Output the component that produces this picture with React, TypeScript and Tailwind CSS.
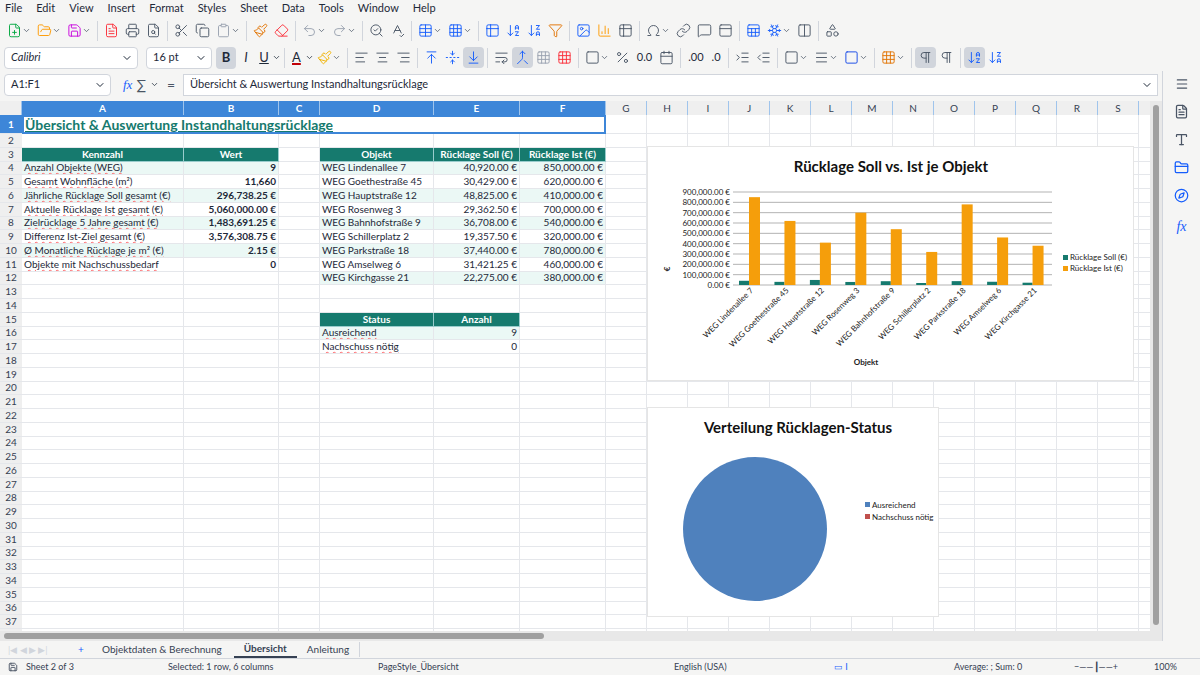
import React from "react";
import {
  FilePlus, FolderOpen, Save, FileText, Printer, FileSearch, Scissors, Copy, Clipboard, Paintbrush, Eraser,
  Undo2, Redo2, SearchCheck, SpellCheck, Table, Grid3x3, ArrowDownAZ, ArrowDownZA, Filter, Image, BarChart3,
  Table2, Omega, Link, MessageSquare, PanelTop, Sheet, Snowflake, Columns2, Shapes, ChevronDown,
  AlignLeft, AlignCenter, AlignRight, ArrowUpToLine, FoldVertical, ArrowDownToLine, WrapText, Merge, Percent,
  Calendar, IndentIncrease, IndentDecrease, Square, Pilcrow, Menu, Type, FolderClosed, Compass,
} from "lucide-react";

const font = { fontFamily: "Lato, 'Open Sans', sans-serif" };
const cols = [22, 162, 95, 41, 114, 86, 86, 41, 41, 41, 41, 41, 41, 41, 41, 41, 41, 41, 41, 41];
const letters = ["", "A", "B", "C", "D", "E", "F", "G", "H", "I", "J", "K", "L", "M", "N", "O", "P", "Q", "R", "S"];

type Cell = { t: string; right?: boolean; bold?: boolean; head?: boolean; shade?: boolean; wavy?: boolean };
const left: [string, string][] = [
  ["Anzahl Objekte (WEG)", "9"],
  ["Gesamt Wohnfläche (m²)", "11,660"],
  ["Jährliche Rücklage Soll gesamt (€)", "296,738.25 €"],
  ["Aktuelle Rücklage Ist gesamt (€)", "5,060,000.00 €"],
  ["Zielrücklage 5 Jahre gesamt (€)", "1,483,691.25 €"],
  ["Differenz Ist-Ziel gesamt (€)", "3,576,308.75 €"],
  ["Ø Monatliche Rücklage je m² (€)", "2.15 €"],
  ["Objekte mit Nachschussbedarf", "0"],
];
const objs: [string, number, number][] = [
  ["WEG Lindenallee 7", 40920, 850000],
  ["WEG Goethestraße 45", 30429, 620000],
  ["WEG Hauptstraße 12", 48825, 410000],
  ["WEG Rosenweg 3", 29362.5, 700000],
  ["WEG Bahnhofstraße 9", 36708, 540000],
  ["WEG Schillerplatz 2", 19357.5, 320000],
  ["WEG Parkstraße 18", 37440, 780000],
  ["WEG Amselweg 6", 31421.25, 460000],
  ["WEG Kirchgasse 21", 22275, 380000],
];
const eur = (n: number) => n.toLocaleString("en-US", { minimumFractionDigits: 2, maximumFractionDigits: 2 }) + " €";

function cellFor(r: number, c: number): Cell | null {
  if (r === 3) {
    const h: Record<number, string> = { 1: "Kennzahl", 2: "Wert", 4: "Objekt", 5: "Rücklage Soll (€)", 6: "Rücklage Ist (€)" };
    if (h[c]) return { t: h[c], head: true };
  }
  if (r >= 4 && r <= 11 && (c === 1 || c === 2)) {
    const row = left[r - 4];
    const shade = r % 2 === 0;
    return c === 1 ? { t: row[0], shade, wavy: true } : { t: row[1], right: true, bold: true, shade };
  }
  if (r >= 4 && r <= 12 && c >= 4 && c <= 6) {
    const o = objs[r - 4];
    const shade = r % 2 === 0;
    if (c === 4) return { t: o[0], shade };
    return { t: eur(c === 5 ? o[1] : o[2]), right: true, shade };
  }
  if (r === 15 && c === 4) return { t: "Status", head: true };
  if (r === 15 && c === 5) return { t: "Anzahl", head: true };
  if (r === 16 && c === 4) return { t: "Ausreichend", shade: true, wavy: true };
  if (r === 16 && c === 5) return { t: "9", right: true, shade: true };
  if (r === 17 && c === 4) return { t: "Nachschuss nötig", wavy: true };
  if (r === 17 && c === 5) return { t: "0", right: true };
  return null;
}

const Ico = ({ I, dd, c = "text-gray-600" }: { I: any; dd?: boolean; c?: string }) => (
  <div className="flex items-center gap-0 px-[3px]">
    <I size={15} strokeWidth={1.5} className={c} />
    {dd && <ChevronDown size={9} className="text-gray-600" />}
  </div>
);
const Sep = () => <div className="w-px h-5 bg-gray-300 mx-[3px]" />;

function BarChart() {
  const x0 = 85, x1 = 404, y0 = 138, yTop = 45;
  const cw = (x1 - x0) / 9;
  const sy = (v: number) => y0 - (v / 900000) * (y0 - yTop);
  return (
    <svg width="485" height="233" className="bg-white" style={font}>
      <text x="243" y="25" textAnchor="middle" fontSize="15" fontWeight="bold" fill="#111">Rücklage Soll vs. Ist je Objekt</text>
      {Array.from({ length: 10 }).map((_, i) => {
        const v = i * 100000;
        const y = sy(v);
        return (
          <g key={i}>
            <line x1={x0} x2={x1} y1={y} y2={y} stroke="#b3b3b3" strokeWidth="1" />
            <text x={x0 - 3} y={y + 3} textAnchor="end" fontSize="8" fill="#222">{eur(v)}</text>
          </g>
        );
      })}
      {objs.map((o, i) => {
        const bx = x0 + i * cw;
        return (
          <g key={o[0]}>
            <rect x={bx + 6} y={sy(o[1])} width="10" height={y0 - sy(o[1])} fill="#167a6e" />
            <rect x={bx + 16} y={sy(o[2])} width="11" height={y0 - sy(o[2])} fill="#f59e0b" />
            <text transform={`translate(${bx + cw / 2 + 3},${y0 + 6}) rotate(-45)`} textAnchor="end" fontSize="8" fill="#222">{o[0]}</text>
          </g>
        );
      })}
      <text transform="translate(22,122) rotate(-90)" textAnchor="middle" fontSize="8" fontWeight="bold" fill="#222">€</text>
      <text x="218" y="218" textAnchor="middle" fontSize="8" fontWeight="bold" fill="#222">Objekt</text>
      <rect x="415" y="108" width="5" height="5" fill="#167a6e" />
      <text x="422" y="113" fontSize="8" fill="#222">Rücklage Soll (€)</text>
      <rect x="415" y="119" width="5" height="5" fill="#f59e0b" />
      <text x="422" y="124" fontSize="8" fill="#222">Rücklage Ist (€)</text>
    </svg>
  );
}

function PieChart() {
  return (
    <svg width="290" height="208" className="bg-white" style={font}>
      <text x="150" y="25" textAnchor="middle" fontSize="15" fontWeight="bold" fill="#111">Verteilung Rücklagen-Status</text>
      <circle cx="107" cy="121" r="72" fill="#4f81bd" />
      <rect x="217" y="94" width="5" height="5" fill="#4f81bd" />
      <text x="224" y="100" fontSize="8" fill="#222">Ausreichend</text>
      <rect x="217" y="106" width="5" height="5" fill="#c0504d" />
      <text x="224" y="112" fontSize="8" fill="#222">Nachschuss nötig</text>
    </svg>
  );
}

export default function App() {
  const rows = Array.from({ length: 38 }, (_, i) => i + 1);
  const gridCols = cols.map((w) => w + "px").join(" ") + " 1fr";
  return (
    <div className="w-[1200px] h-[675px] overflow-hidden bg-[#f5f5f4] flex flex-col text-[11px] text-gray-800" style={font}>
      {/* menu */}
      <div className="h-[17px] flex items-center gap-[14px] px-[5px] text-[11px] text-gray-800">
        {["File", "Edit", "View", "Insert", "Format", "Styles", "Sheet", "Data", "Tools", "Window", "Help"].map((m) => <span key={m}>{m}</span>)}
      </div>
      {/* toolbar 1 */}
      <div className="h-[27px] flex items-center px-1">
        <Ico I={FilePlus} dd c="text-green-600" /><Ico I={FolderOpen} dd c="text-amber-500" /><Ico I={Save} dd c="text-fuchsia-600" /><Sep />
        <Ico I={FileText} c="text-red-500" /><Ico I={Printer} /><Ico I={FileSearch} /><Sep />
        <Ico I={Scissors} /><Ico I={Copy} /><Ico I={Clipboard} dd c="text-gray-400" /><Sep />
        <Ico I={Paintbrush} c="text-amber-600" /><Ico I={Eraser} c="text-red-500" /><Sep />
        <Ico I={Undo2} dd c="text-gray-400" /><Ico I={Redo2} dd c="text-gray-400" /><Sep />
        <Ico I={SearchCheck} /><Ico I={SpellCheck} /><Sep />
        <Ico I={Table} dd c="text-blue-600" /><Ico I={Grid3x3} dd c="text-blue-600" /><Sep />
        <Ico I={Table2} c="text-blue-600" /><Ico I={ArrowDownAZ} c="text-blue-600" /><Ico I={ArrowDownZA} c="text-blue-600" /><Ico I={Filter} c="text-amber-600" /><Sep />
        <Ico I={Image} c="text-blue-600" /><Ico I={BarChart3} c="text-amber-500" /><Ico I={Table2} /><Sep />
        <Ico I={Omega} dd /><Ico I={Link} /><Ico I={MessageSquare} /><Ico I={PanelTop} /><Sep />
        <Ico I={Sheet} c="text-blue-600" /><Ico I={Snowflake} dd c="text-blue-600" /><Ico I={Columns2} /><Sep /><Ico I={Shapes} />
      </div>
      {/* toolbar 2 */}
      <div className="h-[27px] flex items-center px-1">
        <div className="w-[134px] h-[22px] bg-white border border-gray-300 rounded flex items-center justify-between pl-1.5 pr-1 italic">
          Calibri<ChevronDown size={12} />
        </div>
        <div className="w-[66px] h-[22px] ml-2 bg-white border border-gray-300 rounded flex items-center justify-between pl-1.5 pr-1">
          16 pt<ChevronDown size={12} />
        </div>
        <div className="ml-1 w-[20px] h-[22px] bg-gray-300 rounded flex items-center justify-center font-bold text-[13px]">B</div>
        <span className="w-[20px] text-center italic text-[13px]">I</span>
        <span className="w-[16px] text-center underline text-[13px]">U</span><ChevronDown size={9} /><Sep />
        <span className="text-[13px] underline decoration-red-700 decoration-2 px-1">A</span><ChevronDown size={9} />
        <Ico I={Paintbrush} dd c="text-yellow-500" /><Sep />
        <Ico I={AlignLeft} /><Ico I={AlignCenter} /><Ico I={AlignRight} /><Sep />
        <Ico I={ArrowUpToLine} c="text-blue-600" /><Ico I={FoldVertical} c="text-blue-600" />
        <div className="bg-gray-300 rounded py-[3px]"><Ico I={ArrowDownToLine} c="text-blue-600" /></div><Sep />
        <Ico I={WrapText} /><div className="bg-gray-300 rounded py-[3px]"><Ico I={Merge} c="text-blue-600" /></div><Ico I={Grid3x3} c="text-gray-400" /><Ico I={Grid3x3} c="text-red-500" /><Sep />
        <Ico I={Square} dd /><Ico I={Percent} /><span className="px-1">0.0</span><Ico I={Calendar} /><Sep />
        <span className="px-1">.00</span><span className="px-1">.0</span><Sep />
        <Ico I={IndentIncrease} /><Ico I={IndentDecrease} /><Sep />
        <Ico I={Square} dd /><Ico I={Menu} dd /><Ico I={Square} dd c="text-blue-700" /><Sep />
        <Ico I={Grid3x3} dd c="text-amber-600" /><Sep />
        <div className="bg-gray-300 rounded py-[3px]"><Ico I={Pilcrow} /></div><Ico I={Pilcrow} /><Sep />
        <div className="bg-gray-300 rounded py-[3px]"><Ico I={ArrowDownAZ} c="text-blue-600" /></div><Ico I={ArrowDownZA} c="text-blue-600" />
      </div>
      <div className="flex flex-1 min-h-0">
        <div className="w-[1162px] flex flex-col">
          {/* formula bar */}
          <div className="h-[27px] flex items-center px-1 gap-1">
            <div className="w-[107px] h-[22px] bg-white border border-gray-300 rounded flex items-center justify-between pl-1.5 pr-1">
              A1:F1<ChevronDown size={12} />
            </div>
            <span className="ml-2 italic text-blue-600 text-[13px]" style={{ fontFamily: "'Liberation Serif', serif" }}>fx</span>
            <span className="text-[14px] text-gray-600">∑</span><ChevronDown size={9} />
            <span className="text-[14px] text-gray-600 px-1">=</span>
            <div className="flex-1 h-[22px] bg-white border border-gray-300 flex items-center justify-between pl-1.5 pr-1">
              Übersicht &amp; Auswertung Instandhaltungsrücklage<ChevronDown size={12} />
            </div>
          </div>
          <div className="flex mt-[3px]">
            <div className="w-[1150px] flex flex-col">
              <div className="relative h-[530px] bg-white overflow-hidden">
                <div className="grid text-[10px]" style={{ gridTemplateColumns: gridCols, gridTemplateRows: "14px 19px" + " 13.75px".repeat(37) }}>
                  {letters.map((l, i) => (
                    <div key={"h" + i} className={`flex items-center justify-center border-r border-[#9fc4ec] text-[10px] ${i === 0 ? "bg-[#efefef]" : i <= 6 ? "bg-[#3d86d8] text-white font-bold" : "bg-[#efefef] text-gray-700"}`}>{l}</div>
                  ))}
                  <div className="bg-[#efefef]" />
                  {rows.map((r) => (
                    <React.Fragment key={r}>
                      <div className={`flex items-center justify-center border-b border-gray-200 ${r === 1 ? "bg-[#3d86d8] text-white font-bold" : "bg-[#efefef] text-gray-700"}`}>{r}</div>
                      {r === 1 ? (
                        <>
                          <div className="col-span-6 flex items-center px-px border-2 border-[#3d86d8] text-[14px] font-bold text-[#167a6e] underline">Übersicht &amp; Auswertung Instandhaltungsrücklage</div>
                          {cols.slice(7).map((_, c) => <div key={c} className="border-r border-b border-gray-200" />)}
                          <div />
                        </>
                      ) : (
                        <>
                          {cols.slice(1).map((_, ci) => {
                            const c = ci + 1;
                            const cell = cellFor(r, c);
                            return (
                              <div key={c} className={`flex items-center px-[2px] whitespace-nowrap overflow-hidden border-r border-b ${cell?.head ? "bg-[#167a6e] text-white font-bold justify-center border-[#9cc]" : cell?.shade ? "bg-[#ebf8f5] border-gray-200" : "border-gray-200"} ${cell?.right ? "justify-end" : ""} ${cell?.bold ? "font-bold" : ""}`}>
                                {cell && <span className={cell.wavy ? "underline decoration-wavy decoration-red-400 decoration-[0.5px]" : ""}>{cell.t}</span>}
                              </div>
                            );
                          })}
                          <div className="border-b border-gray-200" />
                        </>
                      )}
                    </React.Fragment>
                  ))}
                </div>
                <div className="absolute left-[648px] top-[46px] shadow-[0_0_0_1px_#e5e5e5]"><BarChart /></div>
                <div className="absolute left-[648px] top-[307px] shadow-[0_0_0_1px_#e5e5e5]"><PieChart /></div>
              </div>
              <div className="h-[10px] bg-[#e8e8e8] flex items-center px-1"><div className="w-[540px] h-[6px] bg-[#a0a0a0] rounded" /></div>
            </div>
            <div className="w-[12px] bg-[#e8e8e8] flex flex-col items-center pt-1"><div className="w-[6px] h-[520px] bg-[#a0a0a0] rounded" /></div>
          </div>
        </div>
        <div className="flex-1 flex flex-col items-center gap-[13px] pt-[6px] border-l border-gray-300">
          <Menu size={14} className="text-gray-600" />
          <FileText size={15} className="text-gray-600" />
          <Type size={15} className="text-gray-600" />
          <FolderClosed size={15} className="text-blue-600" />
          <Compass size={15} className="text-blue-600" />
          <span className="italic text-blue-600 text-[14px]" style={{ fontFamily: "'Liberation Serif', serif" }}>fx</span>
        </div>
      </div>
      <div className="h-[18px] flex items-center text-[10px] text-gray-700 border-b border-gray-300">
        <span className="w-[70px] pl-2 text-[9px] text-gray-300 whitespace-nowrap">|◀ ◀ ▶ ▶|</span>
        <span className="text-blue-600 w-[20px] pl-2">+</span>
        <span className="px-[12px]">Objektdaten &amp; Berechnung</span>
        <span className="px-[10px] font-bold border-b-2 border-gray-700">Übersicht</span>
        <span className="px-[10px] border-r border-gray-300">Anleitung</span>
      </div>
      <div className="h-[16px] flex items-center text-[9px] text-gray-700">
        <span className="w-[168px] pl-[8px] flex items-center gap-2"><Save size={10} />Sheet 2 of 3</span>
        <span className="w-[210px]">Selected: 1 row, 6 columns</span>
        <span className="w-[296px]">PageStyle_Übersicht</span>
        <span className="w-[160px]">English (USA)</span>
        <span className="w-[120px] text-blue-600">▭ I</span>
        <span className="w-[120px]">Average: ; Sum: 0</span>
        <span className="w-[80px]">−——┃——+</span>
        <span>100%</span>
      </div>
    </div>
  );
}
